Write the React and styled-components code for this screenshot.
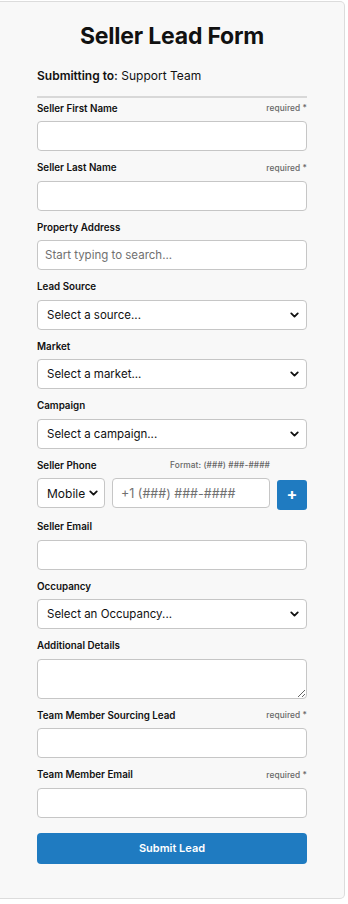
import styled, { createGlobalStyle } from "styled-components";
import { ChevronDown } from "lucide-react";

const GlobalStyle = createGlobalStyle`
  html, body {
    margin: 0;
    padding: 0;
    background: #ffffff;
    font-family: Inter, "Noto Sans", "Liberation Sans", sans-serif;
    color: #111;
  }
  * { box-sizing: border-box; }
`;

const Page = styled.div`
  padding-top: 1px;
  width: 348px;
`;

const Card = styled.form`
  width: 345px;
  background: #f8f8f8;
  border: 1px solid #dcdcdc;
  border-left: none;
  border-radius: 0 5px 5px 0;
  padding: 20px 37px 34px 37px;
`;

const Title = styled.h1`
  margin: 0;
  text-align: center;
  font-size: 23px;
  font-weight: 700;
  line-height: 28px;
  letter-spacing: -0.2px;
`;

const Target = styled.p`
  margin: 18px 0 0 0;
  font-size: 12px;
  line-height: 16px;
  b { font-weight: 600; }
`;

const Divider = styled.hr`
  margin: 12px 0 3px 0;
  border: none;
  height: 2px;
  background: #d8d8d8;
`;

const Field = styled.div`
  margin-bottom: 9.5px;
`;

const LabelRow = styled.div`
  display: flex;
  justify-content: space-between;
  align-items: center;
  height: 14px;
  margin-bottom: 6px;
  padding-right: ${(p) => p.$hintPad || 0}px;
`;

const Label = styled.label`
  font-size: 9.8px;
  font-weight: 600;
  color: #111;
`;

const Hint = styled.span`
  font-size: 8.3px;
  font-weight: 500;
  color: #666;
  letter-spacing: 0.1px;
`;

const Input = styled.input`
  display: block;
  width: 100%;
  height: 30px;
  border: 1px solid #c6c6c6;
  border-radius: 4px;
  background: #fff;
  padding: 0 7px;
  font-family: inherit;
  font-size: 11.5px;
  color: #222;
  outline: none;
  &::placeholder { color: #707070; }
`;

const TextArea = styled.textarea`
  display: block;
  width: 100%;
  height: 40px;
  border: 1px solid #c6c6c6;
  border-radius: 4px;
  background: #fff;
  font-family: inherit;
  resize: vertical;
  outline: none;
`;

const SelectWrap = styled.div`
  position: relative;
  width: ${(p) => p.$width || "100%"};
  flex: none;
  svg {
    position: absolute;
    right: ${(p) => (p.$width ? 5 : 6)}px;
    top: 50%;
    transform: translateY(-50%);
    pointer-events: none;
  }
`;

const Select = styled.select`
  appearance: none;
  display: block;
  width: 100%;
  height: 30px;
  border: 1px solid #c6c6c6;
  border-radius: 4px;
  background: #fff;
  padding: 0 ${(p) => (p.$big ? 14 : 22)}px 0 9px;
  font-family: inherit;
  font-size: ${(p) => (p.$big ? 12 : 11.5)}px;
  color: #111;
  outline: none;
`;

const PhoneRow = styled.div`
  display: flex;
  align-items: flex-start;
  gap: 7px;
`;

const PhoneInput = styled(Input)`
  flex: 1;
  min-width: 0;
  width: auto;
  font-size: 12.5px;
  padding: 0 8px;
`;

const AddButton = styled.button`
  flex: none;
  width: 30px;
  height: 30px;
  margin-top: 2px;
  border: none;
  border-radius: 3px;
  background: #1f7bc1;
  color: #fff;
  font-size: 16px;
  font-weight: 700;
  line-height: 1;
  padding: 0 0 2px 0;
  font-family: inherit;
`;

const SubmitButton = styled.button`
  display: block;
  width: 100%;
  height: 31px;
  margin-top: 15px;
  border: none;
  border-radius: 4px;
  background: #1f7bc1;
  color: #fff;
  font-family: inherit;
  font-size: 11px;
  font-weight: 600;
`;

const Chevron = () => <ChevronDown size={13} strokeWidth={3.4} color="#111" />;

const FieldHead = ({ label, hint, hintPad }) => (
  <LabelRow $hintPad={hintPad}>
    <Label>{label}</Label>
    {hint && <Hint>{hint}</Hint>}
  </LabelRow>
);

const SelectField = ({ label, placeholder }) => (
  <Field>
    <FieldHead label={label} />
    <SelectWrap>
      <Select defaultValue="">
        <option value="">{placeholder}</option>
      </Select>
      <Chevron />
    </SelectWrap>
  </Field>
);

const TextField = ({ label, required, placeholder }) => (
  <Field>
    <FieldHead label={label} hint={required ? "required *" : null} />
    <Input placeholder={placeholder} />
  </Field>
);

export default function App() {
  return (
    <Page>
      <GlobalStyle />
      <Card onSubmit={(e) => e.preventDefault()}>
        <Title>Seller Lead Form</Title>
        <Target>
          <b>Submitting to:</b> Support Team
        </Target>
        <Divider />

        <TextField label="Seller First Name" required />
        <TextField label="Seller Last Name" required />
        <TextField label="Property Address" placeholder="Start typing to search..." />
        <SelectField label="Lead Source" placeholder="Select a source..." />
        <SelectField label="Market" placeholder="Select a market..." />
        <SelectField label="Campaign" placeholder="Select a campaign..." />

        <Field>
          <FieldHead label="Seller Phone" hint="Format: (###) ###-####" hintPad={37} />
          <PhoneRow>
            <SelectWrap $width="68px">
              <Select defaultValue="mobile" $big>
                <option value="mobile">Mobile</option>
                <option value="home">Home</option>
                <option value="work">Work</option>
              </Select>
              <Chevron />
            </SelectWrap>
            <PhoneInput placeholder="+1 (###) ###-####" />
            <AddButton type="button">+</AddButton>
          </PhoneRow>
        </Field>

        <TextField label="Seller Email" />
        <SelectField label="Occupancy" placeholder="Select an Occupancy..." />

        <Field>
          <FieldHead label="Additional Details" />
          <TextArea />
        </Field>

        <TextField label="Team Member Sourcing Lead" required />
        <TextField label="Team Member Email" required />

        <SubmitButton type="submit">Submit Lead</SubmitButton>
      </Card>
    </Page>
  );
}
